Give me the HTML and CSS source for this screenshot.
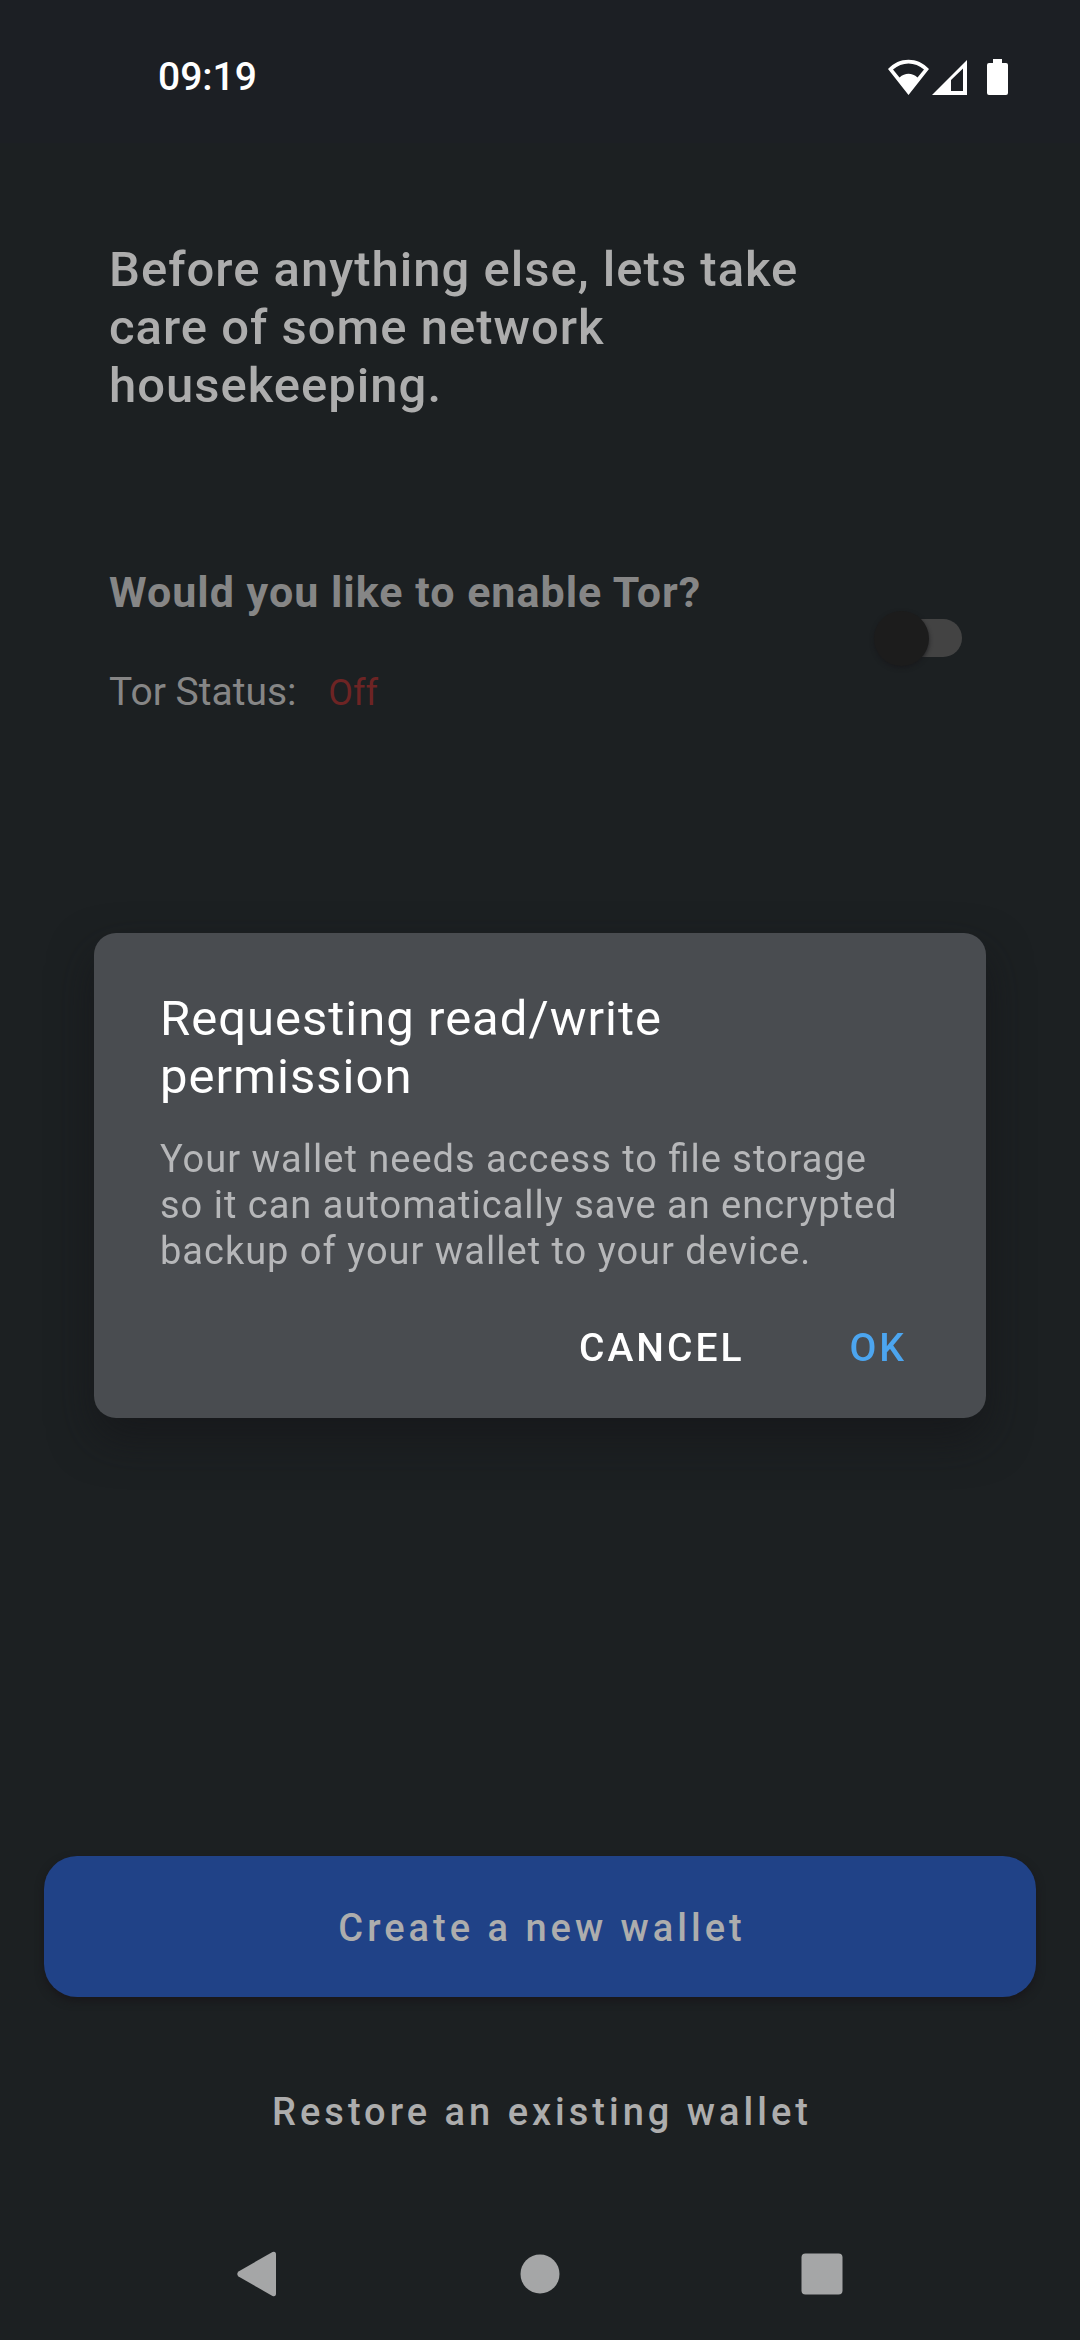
FILE: index.html
```html
<!DOCTYPE html>
<html lang="en">
<head>
<meta charset="utf-8">
<meta name="viewport" content="width=device-width, initial-scale=1">
<title>Wallet setup</title>
<link rel="stylesheet" href="styles.css">
</head>
<body>
<div class="screen">
  <header class="status-bar">
    <time class="clock">09:19</time>
    <div class="status-icons">
      <svg class="icon-wifi" width="41" height="36" viewBox="0 0 41 36" aria-hidden="true"><path fill="#fff" fill-rule="evenodd" d="M0 10C11-2.500 30-2.500 41 10L20.500 36ZM5 10.500L11.500 18.500C17 13.500 24 13.500 29.500 18.500L36 10.500C27 2.500 14 2.500 5 10.500Z"/></svg>
      <svg class="icon-signal" width="35" height="35" viewBox="0 0 35 35" aria-hidden="true"><path fill="#fff" fill-rule="evenodd" d="M0 35L35 0V35ZM19 20V31H31V8.500Z"/></svg>
      <svg class="icon-battery" width="21" height="36" viewBox="0 0 21 36" aria-hidden="true"><path fill="#fff" d="M6 0H15V4H19Q21 4 21 6V34Q21 36 19 36H2Q0 36 0 34V6Q0 4 2 4H6Z"/></svg>
    </div>
  </header>
  <main class="content">
    <h1 class="headline">Before anything else, lets take care of some network housekeeping.</h1>
    <section class="tor">
      <div class="tor-text">
        <label class="tor-question" for="tor">Would you like to enable Tor?</label>
        <p class="tor-status">Tor Status: <span class="tor-value">Off</span></p>
      </div>
      <input class="switch" id="tor" type="checkbox" role="switch">
    </section>
    <div class="actions">
      <button class="button button-primary" type="button">Create a new wallet</button>
      <button class="button button-text" type="button">Restore an existing wallet</button>
    </div>
  </main>
  <nav class="nav-bar" aria-label="System">
    <button class="nav-button" type="button" aria-label="Back"><svg width="46" height="46" viewBox="0 0 46 46"><path fill="#a5a6a7" d="M3.500 20.500L37.500 1Q41 0 41 3.500V42.500Q41 46 37.500 45L3.500 25.500Q1 23 3.500 20.500Z"/></svg></button>
    <button class="nav-button" type="button" aria-label="Home"><svg width="46" height="46" viewBox="0 0 46 46"><circle cx="23" cy="23" r="19.500" fill="#a5a6a7"/></svg></button>
    <button class="nav-button" type="button" aria-label="Recents"><svg width="46" height="46" viewBox="0 0 46 46"><rect x="2.500" y="2.500" width="41" height="41" rx="4" fill="#a5a6a7"/></svg></button>
  </nav>
</div>
<div class="overlay">
  <div class="dialog" role="dialog" aria-modal="true" aria-labelledby="dialog-title">
    <h2 class="dialog-title" id="dialog-title">Requesting read/write permission</h2>
    <p class="dialog-body">Your wallet needs access to file storage so it can automatically save an encrypted backup of your wallet to your device.</p>
    <div class="dialog-actions">
      <button class="dialog-button" type="button">CANCEL</button>
      <button class="dialog-button dialog-button-confirm" type="button">OK</button>
    </div>
  </div>
</div>
</body>
</html>
```

FILE: styles.css
```css
* {
  box-sizing: border-box;
}

body {
  margin: 0;
  background: #1c2022;
  color: #adadad;
  font-family: Roboto, sans-serif;
  font-size: 39px;
  line-height: 46px;
}

h1, h2, p {
  margin: 0;
}

button {
  border: 0;
  background: none;
  font-family: inherit;
  font-size: 39px;
  line-height: 46px;
  font-weight: 500;
}

svg {
  display: block;
}

.screen {
  display: flex;
  flex-direction: column;
  min-height: 100vh;
}

.status-bar {
  display: flex;
  justify-content: space-between;
  align-items: center;
  height: 143px;
  padding: 10px 72px 0 158px;
  background: #1c1f24;
}

.clock {
  color: #fff;
  font-weight: 500;
}

.status-icons {
  display: flex;
  align-items: flex-end;
}

.icon-signal {
  margin-left: 3px;
}

.icon-battery {
  margin-left: 20px;
}

.content {
  display: flex;
  flex-direction: column;
  flex: 1;
  padding: 98px 44px 27px;
}

.headline {
  max-width: 800px;
  padding-left: 65px;
  font-size: 49px;
  line-height: 58px;
  font-weight: 500;
  letter-spacing: 1px;
}

.tor {
  display: flex;
  align-items: center;
  justify-content: space-between;
  margin-top: 151px;
  padding: 0 74px 0 65px;
  color: #868686;
}

.tor-question {
  display: block;
  font-size: 43px;
  line-height: 52px;
  font-weight: 700;
  letter-spacing: 1px;
}

.tor-status {
  margin-top: 51px;
}

.tor-value {
  margin-left: 22px;
  color: #6d2424;
  font-size: 36px;
}

.switch {
  appearance: none;
  display: flex;
  align-items: center;
  width: 88px;
  height: 38px;
  margin: 0 0 6px;
  border-radius: 19px;
  background: linear-gradient(90deg, transparent 28px, #434343 28px);
}

.switch::before {
  content: "";
  width: 55px;
  height: 55px;
  border-radius: 50%;
  background: #1c1c1c;
  box-shadow: 0 2px 4px rgba(24, 24, 28, 0.8);
}

.actions {
  display: flex;
  flex-direction: column;
  gap: 43px;
  margin-top: auto;
}

.button {
  height: 141px;
  padding: 3px 0 0 4px;
  color: #adadad;
  font-size: 38px;
  letter-spacing: 4px;
}

.button-primary {
  border-radius: 33px;
  background: #204287;
  box-shadow: 0 4px 8px rgba(24, 22, 26, 0.9);
}

.nav-bar {
  display: flex;
  justify-content: center;
  gap: 236px;
  height: 132px;
}

.nav-button {
  display: flex;
  align-items: center;
  padding: 0;
}

.overlay {
  position: fixed;
  inset: 0;
  display: flex;
  align-items: center;
  padding: 143px 94px 132px;
}

.dialog {
  flex: 1;
  padding: 57px 35px 20px 66px;
  border-radius: 22px;
  background: #494c50;
  box-shadow: 0 20px 44px rgba(20, 20, 24, 0.6);
}

.dialog-title {
  max-width: 600px;
  color: #fff;
  font-size: 49px;
  line-height: 58px;
  font-weight: 400;
  letter-spacing: 1px;
}

.dialog-body {
  margin-top: 30px;
  padding-right: 40px;
  color: #b6b7b9;
  font-size: 38px;
  letter-spacing: 1px;
  font-feature-settings: "liga" 1;
}

.dialog-actions {
  display: flex;
  justify-content: flex-end;
  gap: 17px;
  margin-top: 24px;
}

.dialog-button {
  height: 100px;
  padding: 0 44px;
  color: #fff;
  letter-spacing: 3px;
}

.dialog-button-confirm {
  color: #4ca5ef;
}
```
